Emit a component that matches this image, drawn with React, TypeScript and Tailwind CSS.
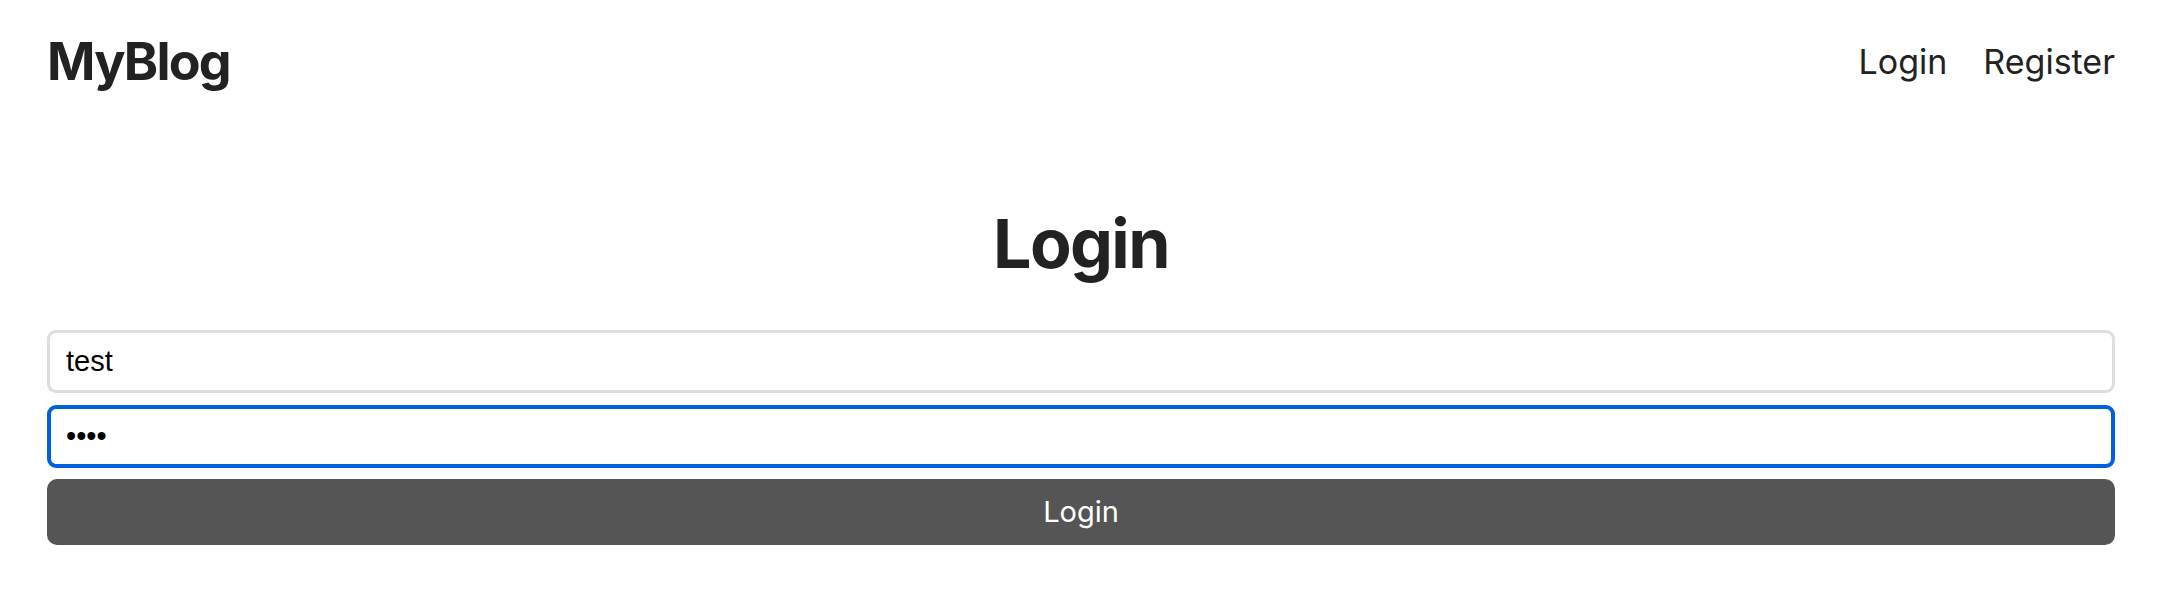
export default function App() {
  return (
    <div className="min-h-screen bg-white px-[47px] pt-[36px] font-['Inter','Noto_Sans',sans-serif] text-[#222222]">
      <header className="flex h-[52px] items-center justify-between">
        <a className="text-[52px] font-bold leading-none tracking-[-1.8px]">MyBlog</a>
        <nav className="flex items-center gap-[36px] text-[34px] leading-none">
          <a>Login</a>
          <a>Register</a>
        </nav>
      </header>

      <main className="mt-[121px]">
        <h1 className="text-center text-[68px] font-bold leading-none tracking-[-1.6px]">Login</h1>
        <form className="mt-[53px] flex flex-col">
          <input
            type="text"
            value="test"
            readOnly
            className="h-[63px] w-full rounded-[9px] border-[3px] border-[#dedede] bg-white px-[16px] font-['Liberation_Sans',Arial,sans-serif] text-[29px] text-black outline-none"
          />
          <input
            type="password"
            value="test"
            readOnly
            className="mt-[12px] h-[63px] w-full rounded-[9px] border-[4px] border-[#0060df] bg-white px-[15px] font-['Liberation_Sans',Arial,sans-serif] text-[29px] text-black outline-none"
          />
          <button
            type="button"
            className="mt-[11px] h-[66px] w-full rounded-[10px] bg-[#555555] text-[29px] text-white"
          >
            Login
          </button>
        </form>
      </main>
    </div>
  );
}
